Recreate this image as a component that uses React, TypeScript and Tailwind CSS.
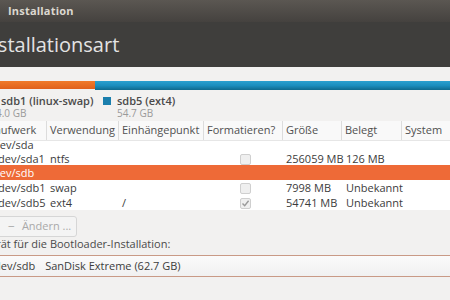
import React from "react";

const font = { fontFamily: "'Open Sans', 'DejaVu Sans', sans-serif" };

function Check({ checked }: { checked?: boolean }) {
  return (
    <div className="w-[11px] h-[11px] rounded-[2px] border border-[#cfcfcf] bg-[#efefef] flex items-center justify-center">
      {checked && (
        <svg width="9" height="9" viewBox="0 0 9 9">
          <path d="M1.5 4.5 L3.7 6.8 L7.6 1.8" fill="none" stroke="#9a9a9a" strokeWidth="1.4" />
        </svg>
      )}
    </div>
  );
}

type Row = {
  dev: string;
  child?: boolean;
  use?: string;
  mount?: string;
  fmt?: "none" | "off" | "on";
  size?: string;
  used?: string;
  sel?: boolean;
  h: string;
};

const rows: Row[] = [
  { dev: "/dev/sda", h: "h-[14px]" },
  { dev: "/dev/sda1", child: true, use: "ntfs", fmt: "off", size: "256059 MB", used: "126 MB", h: "h-[14px]" },
  { dev: "/dev/sdb", sel: true, h: "h-[15px]" },
  { dev: "/dev/sdb1", child: true, use: "swap", fmt: "off", size: "7998 MB", used: "Unbekannt", h: "h-[15px]" },
  { dev: "/dev/sdb5", child: true, use: "ext4", mount: "/", fmt: "on", size: "54741 MB", used: "Unbekannt", h: "h-[14px]" },
];

const grid = "grid grid-cols-[61px_72px_85px_79px_59px_60px_1fr] w-[478px] -ml-[14px]";

export default function App() {
  return (
    <div className="w-[450px] h-[300px] overflow-hidden bg-[#f2f1f0] flex flex-col text-[11px] text-[#3c3c3c]" style={font}>
      {/* title bar */}
      <div className="h-[22px] shrink-0 bg-gradient-to-b from-[#5b5752] to-[#45423f] flex items-center pl-[8px]">
        <span className="font-bold text-[11px] text-[#dcd8d0] tracking-[0.2px]">Installation</span>
      </div>
      {/* header */}
      <div className="h-[45px] shrink-0 bg-[#3f3e3c] flex items-center overflow-hidden">
        <span className="text-[20px] text-[#e3e3e3] -ml-[20px] whitespace-nowrap leading-none">Installationsart</span>
      </div>
      {/* partition bar */}
      <div className="mt-[14px] h-[9px] shrink-0 flex">
        <div className="w-[95px] h-[8px] bg-gradient-to-b from-[#f07a2a] to-[#e0601a]" />
        <div className="flex-1 h-[9px] bg-gradient-to-b from-[#2aa0cf] via-[#1b8ebe] to-[#0f6a8e]" />
      </div>
      {/* legend */}
      <div className="h-[31px] shrink-0 flex pt-[4px]">
        <div className="flex flex-col w-[103px]">
          <span className="leading-[14px] font-semibold text-[#4a4a4a] whitespace-nowrap ml-[1px]">sdb1 (linux-swap)</span>
          <span className="leading-[11px] text-[10px] text-[#9a9a9a] -ml-[4px]">4.0 GB</span>
        </div>
        <div className="w-[8px] h-[8px] bg-[#1b7fad] mt-[3px]" />
        <div className="flex flex-col ml-[6px]">
          <span className="leading-[14px] font-semibold text-[#4a4a4a] whitespace-nowrap">sdb5 (ext4)</span>
          <span className="leading-[11px] text-[10px] text-[#9a9a9a]">54.7 GB</span>
        </div>
      </div>
      {/* table header */}
      <div className="h-[20px] shrink-0 bg-[#f9f9f9] border-b border-[#e6e6e6] overflow-hidden">
        <div className={grid + " h-full text-[#505050]"}>
          {["Laufwerk", "Verwendung", "Einhängepunkt", "Formatieren?", "Größe", "Belegt", "System"].map((t, i) => (
            <div key={t} className={"h-full flex items-center whitespace-nowrap overflow-hidden pl-[3px] " + (i < 6 ? "border-r border-[#dcdcdc]" : "")}>
              {t}
            </div>
          ))}
        </div>
      </div>
      {/* table body */}
      <div className="h-[69px] shrink-0 bg-white overflow-hidden">
        <div className="-mt-[4px]">
          {rows.map((r) => (
            <div key={r.dev} className={grid + " " + r.h + " items-center " + (r.sel ? "bg-[#ee6a37] text-white" : "text-[#3c3c3c]")}>
              <div className={"whitespace-nowrap " + (r.child ? "pl-[8px]" : "pl-[3px]")}>{r.dev}</div>
              <div className="pl-[3px]">{r.use}</div>
              <div className="pl-[3px]">{r.mount}</div>
              <div className="flex justify-center pl-[3px]">
                {r.fmt && r.fmt !== "none" && <Check checked={r.fmt === "on"} />}
              </div>
              <div className="pl-[3px] whitespace-nowrap">{r.size}</div>
              <div className="pl-[4px] whitespace-nowrap">{r.used}</div>
              <div />
            </div>
          ))}
        </div>
      </div>
      {/* button */}
      <div className="mt-[6px] shrink-0 flex">
        <div className="h-[21px] w-[84px] -ml-[7px] rounded-[3px] border border-[#d6d6d6] bg-[#f4f4f4] flex items-center text-[#a9a9a9]">
          <span className="ml-[14px] text-[12px]">−</span>
          <span className="ml-[7px] whitespace-nowrap">Ändern ...</span>
        </div>
      </div>
      {/* label */}
      <div className="h-[14px] leading-[14px] shrink-0 flex overflow-hidden">
        <span className="-ml-[18px] whitespace-nowrap text-[#4a4a4a]">Gerät für die Bootloader-Installation:</span>
      </div>
      {/* combo */}
      <div className="mt-[4px] h-[22px] shrink-0 border-y border-[#c99a86] bg-gradient-to-b from-[#fbfbfb] to-[#f1f1f1] flex items-center overflow-hidden">
        <span className="-ml-[10px] whitespace-nowrap">/dev/sdb</span>
        <span className="ml-[10px] whitespace-nowrap">SanDisk Extreme (62.7 GB)</span>
      </div>
    </div>
  );
}
